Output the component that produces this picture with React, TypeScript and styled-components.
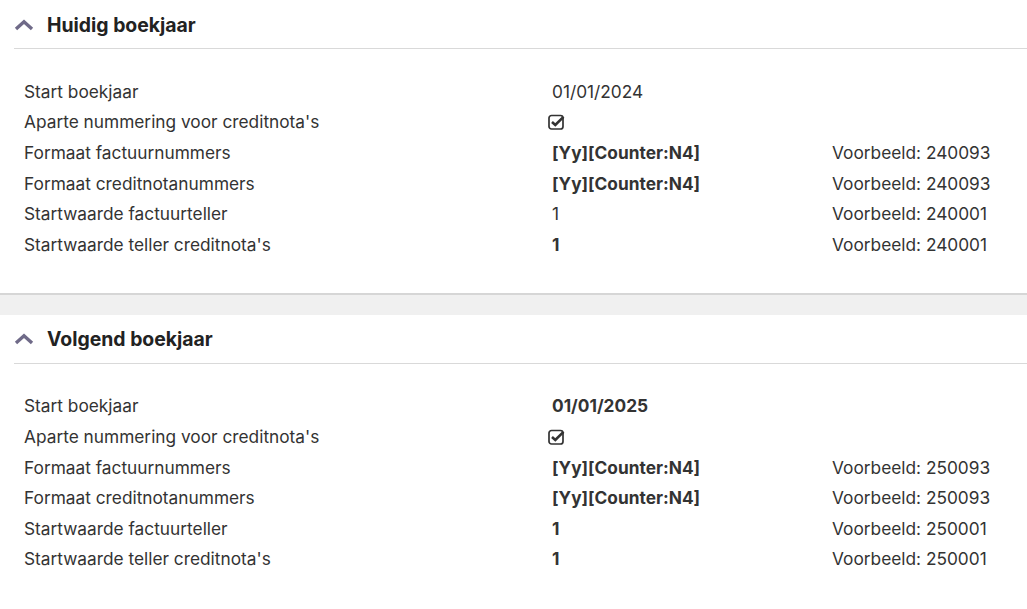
import styled, { createGlobalStyle } from 'styled-components';

const GlobalStyle = createGlobalStyle`
    body {
        margin: 0;
        background: #ffffff;
        font-family: Inter, "Noto Sans", sans-serif;
        color: #333333;
    }
`;

const Page = styled.div`
    width: 1027px;
`;

const Section = styled.section`
    background: #ffffff;
`;

const Spacer = styled.div`
    height: 20px;
    background: #f0f0f0;
    border-top: 2px solid #d6d6d6;
`;

const Header = styled.div`
    display: flex;
    align-items: center;
    gap: 13px;
    height: 49px;
    margin-left: 14px;
    border-bottom: 1px solid #d9d9d9;
    box-sizing: border-box;
    padding-left: 0;
    padding-top: 1px;

    .header__title {
        font-size: 19.4px;
        font-weight: 700;
        color: #222222;
    }
`;

const Body = styled.div`
    padding: 27px 0 33px 24px;
`;

const Row = styled.div`
    display: grid;
    grid-template-columns: 528px 280px 1fr;
    align-items: center;
    height: 30.6px;
    font-size: 17.3px;
    line-height: 21px;
`;

const Value = styled.div<{ $bold?: boolean }>`
    font-weight: ${(p) => (p.$bold ? 700 : 400)};
    color: #333333;
`;

const Chevron = () => (
    <svg width="20" height="12" viewBox="0 0 20 12">
        <path d="M2 10 L10 2.8 L18 10" fill="none" stroke="#6f6a88" strokeWidth="3.4" strokeLinejoin="miter" />
    </svg>
);

const CheckBox = () => (
    <svg width="18" height="17" viewBox="0 0 18 17" style={{ marginLeft: -4, display: 'block' }}>
        <rect x="1" y="2.5" width="14" height="13.5" rx="2.5" fill="none" stroke="#333" strokeWidth="1.7" />
        <path d="M4 9 L7.3 12 L15.5 3.8" fill="none" stroke="#333" strokeWidth="2.6" />
    </svg>
);

type Line = {
    label: string;
    value: string;
    bold?: boolean;
    check?: boolean;
    example?: string;
};

const current: Line[] = [
    { label: 'Start boekjaar', value: '01/01/2024' },
    { label: "Aparte nummering voor creditnota's", value: '', check: true },
    { label: 'Formaat factuurnummers', value: '[Yy][Counter:N4]', bold: true, example: 'Voorbeeld: 240093' },
    { label: 'Formaat creditnotanummers', value: '[Yy][Counter:N4]', bold: true, example: 'Voorbeeld: 240093' },
    { label: 'Startwaarde factuurteller', value: '1', example: 'Voorbeeld: 240001' },
    { label: "Startwaarde teller creditnota's", value: '1', bold: true, example: 'Voorbeeld: 240001' },
];

const next: Line[] = [
    { label: 'Start boekjaar', value: '01/01/2025', bold: true },
    { label: "Aparte nummering voor creditnota's", value: '', check: true },
    { label: 'Formaat factuurnummers', value: '[Yy][Counter:N4]', bold: true, example: 'Voorbeeld: 250093' },
    { label: 'Formaat creditnotanummers', value: '[Yy][Counter:N4]', bold: true, example: 'Voorbeeld: 250093' },
    { label: 'Startwaarde factuurteller', value: '1', bold: true, example: 'Voorbeeld: 250001' },
    { label: "Startwaarde teller creditnota's", value: '1', bold: true, example: 'Voorbeeld: 250001' },
];

const YearSection = ({ title, lines }: { title: string; lines: Line[] }) => (
    <Section>
        <Header>
            <Chevron />
            <span className="header__title">{title}</span>
        </Header>
        <Body>
            {lines.map((line) => (
                <Row key={line.label}>
                    <div>{line.label}</div>
                    <Value $bold={line.bold}>{line.check ? <CheckBox /> : line.value}</Value>
                    <div>{line.example}</div>
                </Row>
            ))}
        </Body>
    </Section>
);

export default function App() {
    return (
        <Page>
            <GlobalStyle />
            <YearSection title="Huidig boekjaar" lines={current} />
            <Spacer />
            <YearSection title="Volgend boekjaar" lines={next} />
        </Page>
    );
}
